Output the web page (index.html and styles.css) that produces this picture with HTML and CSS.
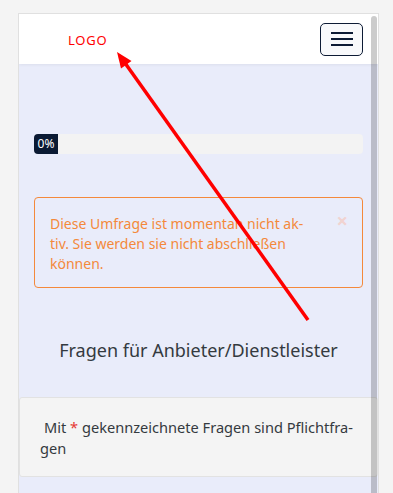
FILE: index.html
```html
<!DOCTYPE html>
<html lang="de">
  <head>
    <meta charset="UTF-8" />
    <meta name="viewport" content="width=device-width, initial-scale=1.0" />
    <title>Umfrage</title>
    <link rel="stylesheet" href="styles.css">
  </head>
  <body>
    <div class="frame">
      <header class="topbar">
        <span class="logo">LOGO</span>
        <button class="menu-toggle" aria-label="Menü">
          <span></span>
          <span></span>
          <span></span>
        </button>
      </header>

      <main class="survey">
        <div class="progress">
          <div class="progress-bar">0%</div>
        </div>

        <div class="alert">
          <p>Diese Umfrage ist momentan nicht ak&shy;tiv. Sie werden sie nicht abschließen können.</p>
          <span class="alert-close">&times;</span>
        </div>

        <h2 class="survey-title">Fragen für Anbieter/Dienstleister</h2>

        <p class="note">Mit <span class="required">*</span> gekennzeichnete Fragen sind Pflicht&shy;fra&shy;gen</p>
      </main>

      <div class="scrollbar"></div>
    </div>

    <!-- Markierung -->
    <svg class="marker" width="393" height="493" viewBox="0 0 393 493">
      <line x1="308" y1="320" x2="125" y2="63" stroke="#ff0000" stroke-width="3.5" />
      <polygon points="117,52 121,68.5 131.5,61" fill="#ff0000" />
    </svg>
  </body>
</html>
```

FILE: styles.css
```css
/* Grundlayout */
body {
  margin: 0;
  background-color: #f4f4f4;
  font-family: "Noto Sans", "Open Sans", sans-serif;
  color: #343a40;
}

.frame {
  position: relative;
  box-sizing: border-box;
  width: 361px;
  min-height: 480px;
  margin: 13px 0 0 18px;
  border: 1px solid #e0e0e0;
  border-bottom: none;
  background-color: #e9ecfa;
  overflow: hidden;
}

/* Kopfleiste */
.topbar {
  height: 50px;
  display: flex;
  align-items: center;
  justify-content: space-between;
  padding: 0 15px 0 49px;
  background-color: #fff;
  box-shadow: 0 1px 3px rgba(0, 0, 0, 0.06);
}

.logo {
  color: #ff0000;
  font-size: 13px;
  letter-spacing: 0.8px;
  margin-top: 1px;
}

.menu-toggle {
  width: 43px;
  height: 33px;
  display: flex;
  flex-direction: column;
  align-items: center;
  justify-content: center;
  gap: 4px;
  padding: 0;
  border: 1px solid #0d1b35;
  border-radius: 5px;
  background-color: #f8f9fb;
}

.menu-toggle span {
  display: block;
  width: 22px;
  height: 2px;
  background-color: #0d1b35;
}

/* Inhalt */
.survey {
  padding: 70px 15px 0;
}

.progress {
  height: 20px;
  border-radius: 4px;
  background-color: #f3f3f3;
  overflow: hidden;
  display: flex;
}

.progress-bar {
  width: 24px;
  background-color: #0b1a33;
  color: #fff;
  font-size: 12px;
  line-height: 20px;
  text-align: center;
}

.alert {
  position: relative;
  margin-top: 43px;
  padding: 16px 58px 13px 15px;
  border: 1px solid #f4893b;
  border-radius: 4px;
  color: #f4893b;
  font-size: 14px;
  line-height: 20px;
}

.alert p {
  margin: 0;
  hyphens: manual;
}

.alert-close {
  position: absolute;
  top: 13px;
  right: 14px;
  color: #f1d3d0;
  font-size: 20px;
  font-weight: bold;
  line-height: 20px;
}

.survey-title {
  margin: 49px 0 34px;
  font-size: 18px;
  font-weight: normal;
  text-align: center;
  color: #343a40;
  line-height: 26px;
}

.note {
  margin: 0 -15px;
  padding: 19px 20px 17px;
  border: 1px solid #e2e2e2;
  border-radius: 3px;
  background-color: #f4f4f4;
  font-size: 14.6px;
  line-height: 21px;
  text-indent: 4px;
}

.required {
  color: #e53935;
}

/* Überlagerungen */
.scrollbar {
  position: absolute;
  top: 2px;
  right: 1px;
  width: 6px;
  height: 100%;
  border-radius: 3px;
  background-color: rgba(0, 0, 0, 0.2);
}

.marker {
  position: absolute;
  top: 0;
  left: 0;
  pointer-events: none;
}
```
